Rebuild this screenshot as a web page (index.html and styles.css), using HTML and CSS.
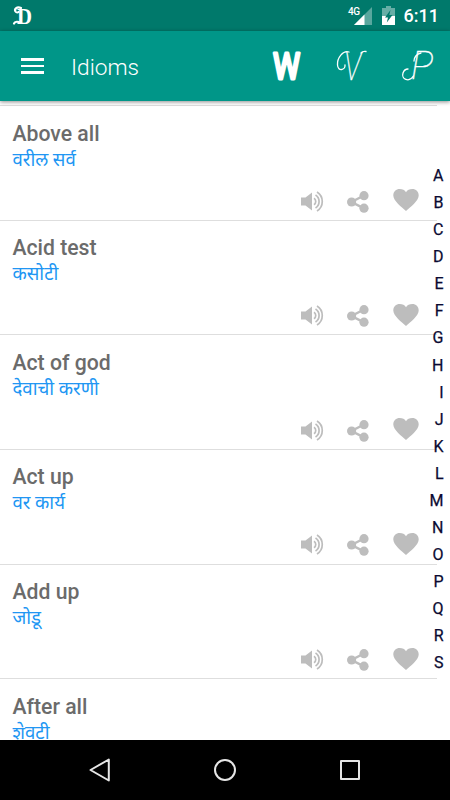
FILE: index.html
```html
<!DOCTYPE html>
<html lang="en">
<head>
<meta charset="UTF-8">
<title>Idioms</title>
<link rel="stylesheet" href="styles.css">
</head>
<body>

<!-- shared icons -->
<svg class="sprites" width="0" height="0">
    <symbol id="speaker" viewBox="0 0 24 22">
        <path d="M0 6.500h4.500L11 1.500v18L4.500 14.500H0z" fill="#bdbdbd"/>
        <path d="M13 7.200a4 4 0 0 1 0 6.600M14.500 4a7.700 7.700 0 0 1 0 13M16 1a11.200 11.200 0 0 1 0 19" fill="none" stroke="#bdbdbd" stroke-width="1.7"/>
    </symbol>
    <symbol id="share" viewBox="0 0 22 22">
        <path d="M17 4.500L4.500 11 17 17.300" fill="none" stroke="#bdbdbd" stroke-width="2.5"/>
        <circle cx="17" cy="4.700" r="4.600" fill="#bdbdbd"/>
        <circle cx="4.600" cy="11" r="4.600" fill="#bdbdbd"/>
        <circle cx="17" cy="17.200" r="4.600" fill="#bdbdbd"/>
    </symbol>
    <symbol id="heart" viewBox="0 0 26 22">
        <path d="M13 22C9 18 .3 12 .3 6.400.3 2.700 3.100 0 6.700 0 9.500 0 11.800 1.200 13 3.200 14.200 1.200 16.500 0 19.300 0c3.600 0 6.400 2.700 6.400 6.400C25.700 12 17 18 13 22z" fill="#bdbdbd"/>
    </symbol>
</svg>

<div class="status-bar">
    <svg class="logo" width="22" height="24" viewBox="0 0 22 24">
        <text x="5" y="20" textLength="15" lengthAdjust="spacingAndGlyphs">D</text>
        <path d="M9 4C5 2 2 5 3.500 7.500c1 1.500 2.500 1 3 .5M8 18.500c-2-1-5-1-6 1"/>
    </svg>
    <div class="status-icons">
        <span class="network">4G</span>
        <svg class="signal" width="18" height="18" viewBox="0 0 18 18">
            <path d="M18 0v18H0z" fill="#fff" fill-opacity=".35"/>
            <path d="M10.500 7.500V18H0z" fill="#fff"/>
        </svg>
        <svg class="battery" width="13" height="19" viewBox="0 0 13 19">
            <path d="M0 2h4V0h5v2h4v8H0z" fill="#fff" fill-opacity=".4"/>
            <path d="M0 10h13v9H0z" fill="#fff"/>
            <path d="M8.500 4L3 11.500h3L4.800 16.500 10.500 9H7.300z" fill="#00796b"/>
        </svg>
        <span class="clock">6:11</span>
    </div>
</div>

<header class="toolbar">
    <div class="menu"><i></i><i></i><i></i></div>
    <h1>Idioms</h1>
    <nav class="tabs">
        <svg width="34" height="48" viewBox="0 -7 34 48">
            <text class="tab-w" x="4" y="30" textLength="27" lengthAdjust="spacingAndGlyphs">W</text>
        </svg>
        <svg width="34" height="48" viewBox="0 -7 34 48">
            <text class="tab-script" x="9" y="31" textLength="17" lengthAdjust="spacingAndGlyphs">V</text>
            <path class="swash" d="M14 3C8 1 2 9 2.500 16c.5 7 8 5 7.500 0M26 4c2-2 3-2 5-1.500"/>
        </svg>
        <svg width="34" height="48" viewBox="0 -7 34 48">
            <text class="tab-script" x="10" y="30" textLength="22" lengthAdjust="spacingAndGlyphs">P</text>
            <path class="swash" d="M12.500 27C8 34 0 30 2 24c1-3 3-4 5-4M20 4c-5 1-7 5-7 8"/>
        </svg>
    </nav>
</header>

<main class="content">
    <div class="list" id="list"></div>
    <div class="index" id="index"></div>
</main>

<footer class="nav-bar">
    <svg width="22" height="26" viewBox="0 0 22 26"><path d="M19.800 2.500v21L1.500 13z"/></svg>
    <svg width="22" height="26" viewBox="0 0 22 26"><circle cx="11" cy="13" r="10"/></svg>
    <svg width="22" height="26" viewBox="0 0 22 26"><path d="M2 4h18v18H2z"/></svg>
</footer>

<script>
    const idioms = [
        ['Above all', 'वरील सर्व'],
        ['Acid test', 'कसोटी'],
        ['Act of god', 'देवाची करणी'],
        ['Act up', 'वर कार्य'],
        ['Add up', 'जोडू'],
        ['After all', 'शेवटी']
    ];

    document.getElementById('list').innerHTML = idioms.map(([title, meaning]) => `
        <div class="idiom">
            <h2>${title}</h2>
            <p lang="mr">${meaning}</p>
            <div class="actions">
                <svg width="24" height="22"><use href="#speaker"/></svg>
                <svg width="22" height="22"><use href="#share"/></svg>
                <svg width="26" height="22"><use href="#heart"/></svg>
            </div>
        </div>
    `).join('');

    document.getElementById('index').innerHTML =
        [...'ABCDEFGHIJKLMNOPQRS'].map(c => `<span>${c}</span>`).join('');
</script>

</body>
</html>
```
FILE: styles.css
```css
* {
    box-sizing: border-box;
}
body {
    margin: 0;
    height: 800px;
    display: flex;
    flex-direction: column;
    overflow: hidden;
    background: #fff;
    font-family: Roboto, "Noto Sans", sans-serif;
}
h1, h2, p {
    margin: 0;
}
.sprites {
    position: absolute;
}
.status-bar {
    height: 31px;
    flex: none;
    display: flex;
    justify-content: space-between;
    align-items: center;
    padding: 0 11px 0 12px;
    background: #00796b;
    color: #fff;
}
.logo text {
    font: bold 23px "Liberation Serif", serif;
    fill: #fff;
}
.logo path {
    fill: none;
    stroke: #fff;
    stroke-width: 2.2;
    stroke-linecap: round;
}
.status-icons {
    display: flex;
    align-items: center;
}
.network {
    font-size: 10px;
    font-weight: 500;
    line-height: 12px;
    letter-spacing: -.5px;
    margin: -8px -6px 0 0;
}
.battery {
    margin: 0 9px 0 10px;
}
.clock {
    font-size: 18px;
    font-weight: 500;
    line-height: 31px;
}
.toolbar {
    height: 70px;
    flex: none;
    display: flex;
    align-items: center;
    padding: 0 15px 0 21px;
    background: #009688;
    color: #fff;
    position: relative;
    z-index: 1;
    box-shadow: 0 1px 4px rgba(0, 0, 0, .45);
}
.menu {
    width: 23px;
    display: grid;
    gap: 4px;
}
.menu i {
    height: 2.500px;
    background: #fff;
}
.toolbar h1 {
    margin: 3px 0 0 27px;
    font-size: 22.700px;
    font-weight: 300;
    line-height: 30px;
}
.tabs {
    display: flex;
    gap: 32px;
    margin-left: auto;
}
.tab-w {
    font: 400 36px Roboto, sans-serif;
    fill: #fff;
    stroke: #fff;
    stroke-width: 3;
    stroke-linejoin: round;
}
.tab-script {
    font: italic 100 38px Roboto, sans-serif;
    fill: #fff;
    stroke: #fff;
    stroke-width: .4;
}
.swash {
    fill: none;
    stroke: #fff;
    stroke-width: 1.3;
    stroke-linecap: round;
}
.content {
    flex: 1;
    min-height: 0;
    position: relative;
    overflow: hidden;
    padding-top: 4px;
}
.list {
    width: 437px;
}
.idiom {
    height: 114.670px;
    padding: 14.500px 18px 0 12.500px;
    border-top: 1px solid #dedede;
}
.idiom h2 {
    font-size: 21.200px;
    font-weight: 500;
    line-height: 26px;
    color: #6b6b6b;
}
.idiom p {
    font-size: 18.600px;
    line-height: 26px;
    color: #2196f3;
}
.actions {
    display: flex;
    justify-content: flex-end;
    align-items: center;
    margin-top: 16.500px;
}
.actions svg:first-child {
    margin-top: 1px;
}
.actions svg:nth-child(2) {
    margin: 1px 24px 0 22px;
}
.actions svg:last-child {
    margin-bottom: 2px;
}
.index {
    position: absolute;
    top: 61px;
    right: 6.500px;
    display: grid;
    text-align: right;
    font-size: 16px;
    font-weight: 400;
    -webkit-text-stroke: .25px #0a0a32;
    line-height: 27.080px;
    color: #0a0a32;
}
.nav-bar {
    height: 60px;
    flex: none;
    display: flex;
    justify-content: space-between;
    align-items: center;
    padding: 0 89px;
    background: #000;
}
.nav-bar svg {
    fill: none;
    stroke: #e6e6e6;
    stroke-width: 2;
    stroke-linejoin: round;
}
```
